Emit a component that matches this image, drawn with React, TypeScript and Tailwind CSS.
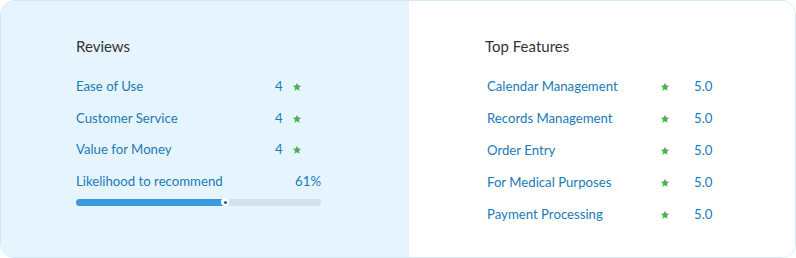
const reviews = [
  { label: "Ease of Use", score: "4" },
  { label: "Customer Service", score: "4" },
  { label: "Value for Money", score: "4" },
]

const features = [
  "Calendar Management",
  "Records Management",
  "Order Entry",
  "For Medical Purposes",
  "Payment Processing",
]

const Star = () => (
  <svg viewBox="0 0 24 24" className="h-[10px] w-[10px]" fill="#4caf50">
    <path d="M12 2l2.9 6.6 7.1.6-5.4 4.7 1.6 7-6.2-3.7-6.2 3.7 1.6-7L2 9.2l7.1-.6z" />
  </svg>
)

export default function App() {
  const likelihood = 61

  return (
    <div className="w-[796px] h-[258px] bg-white font-['Lato',sans-serif]">
      <div className="flex h-full rounded-[14px] border border-[#d4e9f8] overflow-hidden">
        {/* Reviews */}
        <div className="w-[408px] bg-[#e6f4fe] pl-[75px] pt-[36px]">
          <h3 className="h-[18px] leading-[18px] text-[15px] text-[#333]">Reviews</h3>
          <div className="mt-[16px] w-[245px]">
            {reviews.map((r) => (
              <div key={r.label} className="flex items-center h-[31.7px] text-[13.2px] text-[#1a7bb6]">
                <span className="w-[199px]">{r.label}</span>
                <span className="w-[17px]">{r.score}</span>
                <Star />
              </div>
            ))}
            <div className="flex items-center justify-between h-[31.7px] text-[13.2px] text-[#1a7bb6]">
              <span>Likelihood to recommend</span>
              <span>{likelihood}%</span>
            </div>
            <div className="relative mt-[1px] h-[7px] rounded-full bg-[#d1e3f1]">
              <div className="h-full rounded-full bg-[#3b98df]" style={{ width: `${likelihood}%` }} />
              <div
                className="absolute top-1/2 -translate-x-1/2 -translate-y-1/2 h-[8px] w-[8px] rounded-full bg-white flex items-center justify-center"
                style={{ left: `${likelihood}%` }}
              >
                <div className="h-[3px] w-[3px] rounded-full bg-[#1d5f8f]" />
              </div>
            </div>
          </div>
        </div>

        {/* Top features */}
        <div className="flex-1 bg-white pl-[76px] pt-[36px]">
          <h3 className="h-[18px] leading-[18px] text-[15px] text-[#333]">Top Features</h3>
          <div className="mt-[16px] pl-[2px]">
            {features.map((f) => (
              <div key={f} className="flex items-center h-8 text-[13.2px] text-[#1a7bb6]">
                <span className="w-[173px]">{f}</span>
                <span className="w-[34px]">
                  <Star />
                </span>
                <span>5.0</span>
              </div>
            ))}
          </div>
        </div>
      </div>
    </div>
  )
}
